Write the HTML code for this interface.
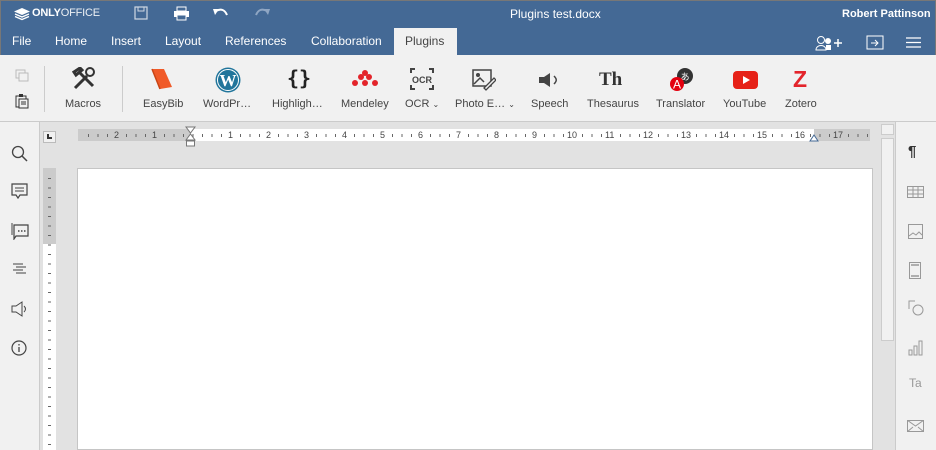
<!DOCTYPE html>
<html><head><style>
*{margin:0;padding:0;box-sizing:border-box}
body{width:936px;height:450px;overflow:hidden;font-family:"Liberation Sans",Arial,sans-serif;background:#e2e2e2;position:relative;font-size:12px;color:#444}
.abs{position:absolute}
#hdr{left:0;top:0;width:936px;height:55px;background:#446995;border:1px solid #777;border-bottom:none}
.w{color:#fff;font-size:12px}
.tab{top:34px;color:#fff;font-size:12px}
#tb{left:0;top:55px;width:936px;height:67px;background:#f1f1f1;border-bottom:1px solid #cbcbcb}
.btn{top:98px;font-size:11px;color:#444;text-align:center}
.ic{top:66px}
#ls{left:0;top:122px;width:40px;height:328px;background:#f1f1f1;border-right:1px solid #cbcbcb}
#rs{left:895px;top:122px;width:41px;height:328px;background:#f1f1f1;border-left:1px solid #cbcbcb}
.rl{font-size:9px;color:#444}
</style></head><body>
<div id="hdr" class="abs"></div>
<svg class="abs" style="left:12px;top:7px" width="20" height="14" viewBox="0 0 20 14"><path d="M10 1 18 4.5 10 8 2 4.5Z" fill="#fff"/><path d="M3 7 10 10 17 7M3 9.5 10 12.5 17 9.5" stroke="#fff" stroke-width="1.3" fill="none"/></svg>
<div class="abs w" style="left:32px;top:7px;font-weight:bold;font-size:11px;letter-spacing:-0.2px">ONLY<span style="font-weight:normal;opacity:.9">OFFICE</span></div>
<svg class="abs" style="left:134px;top:6px" width="14" height="14"><rect x="1" y="1" width="12" height="12" fill="none" stroke="#cfd8e3" stroke-width="1.2"/><rect x="4" y="1" width="6" height="4" fill="none" stroke="#cfd8e3"/></svg>
<svg class="abs" style="left:173px;top:6px" width="17" height="15"><rect x="4" y="1" width="9" height="4" fill="none" stroke="#fff"/><rect x="1" y="5" width="15" height="6" fill="#fff"/><rect x="4" y="9" width="9" height="5" fill="#446995" stroke="#fff"/></svg>
<svg class="abs" style="left:213px;top:8px" width="16" height="10"><path d="M3 3 C8 0 12 2 14 7" stroke="#fff" stroke-width="2" fill="none"/><path d="M0 1 L6 1 L2 7Z" fill="#fff"/></svg>
<svg class="abs" style="left:254px;top:8px" width="16" height="10"><path d="M13 3 C8 0 4 2 2 7" stroke="#8fa6c3" stroke-width="2" fill="none"/><path d="M16 1 L10 1 L14 7Z" fill="#8fa6c3"/></svg>
<div class="abs w" style="left:510px;top:7px">Plugins test.docx</div>
<div class="abs w" style="left:842px;top:8px;font-weight:bold;font-size:11px">Robert Pattinson</div>
<div class="abs tab" style="left:12px">File</div>
<div class="abs tab" style="left:55px">Home</div>
<div class="abs tab" style="left:111px">Insert</div>
<div class="abs tab" style="left:165px">Layout</div>
<div class="abs tab" style="left:225px">References</div>
<div class="abs tab" style="left:311px">Collaboration</div>
<div class="abs" style="left:394px;top:28px;width:63px;height:28px;background:#f1f1f1"></div>
<div class="abs tab" style="left:405px;color:#444">Plugins</div>
<svg class="abs" style="left:815px;top:35px" width="30" height="16"><circle cx="6" cy="5" r="3.5" fill="none" stroke="#fff"/><path d="M1 15 C1 9 11 9 11 15Z" fill="none" stroke="#fff"/><circle cx="13" cy="6" r="3" fill="#fff"/><rect x="11" y="10" width="5" height="5" fill="#fff"/><path d="M19 8h8M23 4v8" stroke="#fff" stroke-width="1.5"/></svg>
<svg class="abs" style="left:866px;top:35px" width="18" height="15"><rect x="1" y="1" width="16" height="13" fill="none" stroke="#fff"/><path d="M5 8h7M9 5l3 3-3 3" stroke="#fff" fill="none"/></svg>
<svg class="abs" style="left:906px;top:37px" width="15" height="11"><path d="M0 1h15M0 5.5h15M0 10h15" stroke="#fff" stroke-width="1.2"/></svg>

<div id="tb" class="abs"></div>
<svg class="abs" style="left:15px;top:69px" width="14" height="13"><rect x="1" y="1" width="9" height="8" fill="none" stroke="#bbb"/><rect x="4" y="4" width="9" height="8" fill="#f1f1f1" stroke="#bbb"/></svg>
<svg class="abs" style="left:15px;top:94px" width="14" height="15"><rect x="1" y="2" width="10" height="11" fill="none" stroke="#333"/><rect x="4" y="5" width="9" height="9" fill="#f1f1f1" stroke="#333"/><rect x="4" y="0" width="4" height="3" fill="#333"/><path d="M6 8h5M6 10h5" stroke="#333"/></svg>
<div class="abs" style="left:44px;top:66px;width:1px;height:46px;background:#ccc"></div>
<div class="abs" style="left:122px;top:66px;width:1px;height:46px;background:#ccc"></div>
<svg class="abs ic" style="left:72px;top:67px" width="24" height="24"><path d="M3 21 L15 9M7 5 L21 19M2 5 L8 1 L10 3 L4 8Z" stroke="#333" stroke-width="3" fill="none"/><circle cx="18" cy="5" r="4" fill="none" stroke="#333" stroke-width="2"/></svg>
<div class="abs btn" style="left:65px">Macros</div>
<svg class="abs ic" style="left:150px;top:67px" width="24" height="24"><path d="M2 2 L14 2 L22 20 L10 22Z" fill="#f05a28"/><path d="M2 2 L10 22" stroke="#c94515" stroke-width="1.5"/></svg>
<div class="abs btn" style="left:143px">EasyBib</div>
<svg class="abs ic" style="left:215px;top:67px" width="26" height="26"><circle cx="13" cy="13" r="12.5" fill="#21759b"/><circle cx="13" cy="13" r="10.5" fill="none" stroke="#fff" stroke-width="1"/><text x="13" y="19" text-anchor="middle" font-family="Liberation Serif" font-weight="bold" font-size="17" fill="#fff">W</text></svg>
<div class="abs btn" style="left:203px">WordPr…</div>
<div class="abs" style="left:287px;top:66px;font-size:20px;font-weight:bold;color:#222;font-family:'DejaVu Sans Mono',monospace">{}</div>
<div class="abs btn" style="left:272px">Highligh…</div>
<svg class="abs ic" style="left:351px;top:69px" width="28" height="18"><g fill="#e3242b"><circle cx="4" cy="14" r="3"/><circle cx="10" cy="8" r="3"/><circle cx="14" cy="14" r="3"/><circle cx="18" cy="8" r="3"/><circle cx="24" cy="14" r="3"/><circle cx="14" cy="4" r="3"/></g></svg>
<div class="abs btn" style="left:341px">Mendeley</div>
<svg class="abs ic" style="left:410px;top:68px" width="24" height="22"><path d="M1 5V1h4M19 1h4v4M23 17v4h-4M5 21H1v-4" stroke="#444" stroke-width="2" fill="none"/><text x="12" y="15" text-anchor="middle" font-size="9" font-weight="bold" fill="#444" font-family="Liberation Sans">OCR</text></svg>
<div class="abs btn" style="left:405px">OCR <span style="font-size:8px">⌄</span></div>
<svg class="abs ic" style="left:472px;top:69px" width="24" height="22"><rect x="1" y="1" width="18" height="16" fill="none" stroke="#444" stroke-width="1.5"/><circle cx="6" cy="6" r="2" fill="#444"/><path d="M2 15 L8 9 L12 13" stroke="#444" fill="none" stroke-width="1.5"/><path d="M12 19 L22 9 L24 11 L14 21Z" fill="#f1f1f1" stroke="#444" stroke-width="1.3"/></svg>
<div class="abs btn" style="left:455px">Photo E… <span style="font-size:8px">⌄</span></div>
<svg class="abs ic" style="left:538px;top:72px" width="24" height="16"><path d="M1 5h5l6-4v14l-6-4H1Z" fill="#444"/><path d="M16 4 C19 7 19 9 16 12" stroke="#444" stroke-width="1.5" fill="none"/></svg>
<div class="abs btn" style="left:531px">Speech</div>
<div class="abs" style="left:599px;top:69px;font-family:'Liberation Serif',serif;font-weight:bold;font-size:19px;color:#333">Th</div>
<div class="abs btn" style="left:587px">Thesaurus</div>
<svg class="abs ic" style="left:667px;top:67px" width="28" height="26"><circle cx="18" cy="9" r="8" fill="#333"/><text x="18" y="13" text-anchor="middle" font-size="9" fill="#fff" font-family="Noto Sans CJK JP">あ</text><circle cx="10" cy="17" r="7" fill="#e3000f"/><text x="10" y="21.5" text-anchor="middle" font-size="12" fill="#fff" font-family="Liberation Sans">A</text></svg>
<div class="abs btn" style="left:656px">Translator</div>
<svg class="abs ic" style="left:733px;top:71px" width="25" height="18"><rect width="25" height="18" rx="4" fill="#e62117"/><path d="M10 5v8l7-4Z" fill="#fff"/></svg>
<div class="abs btn" style="left:723px">YouTube</div>
<div class="abs" style="left:793px;top:66px;font-size:23px;font-weight:bold;color:#e3242b;font-family:'Liberation Sans'">Z</div>
<div class="abs btn" style="left:785px">Zotero</div>

<div id="ls" class="abs"></div>
<svg class="abs" style="left:11px;top:145px" width="18" height="18"><circle cx="7" cy="7" r="5.5" fill="none" stroke="#444" stroke-width="1.3"/><path d="M11 11l5 5" stroke="#444" stroke-width="1.5"/></svg>
<svg class="abs" style="left:11px;top:183px" width="18" height="18"><path d="M1 1h15v11H9l-2 3-2-3H1Z" fill="none" stroke="#444" stroke-width="1.2"/><path d="M4 5h9M4 8h9" stroke="#444"/></svg>
<svg class="abs" style="left:11px;top:222px" width="18" height="18"><path d="M3 3h14v11H5l-2 3Z" fill="none" stroke="#444" stroke-width="1.2"/><path d="M1 1v12" stroke="#444"/><path d="M7 9h1.5M10 9h1.5M13 9h1.5" stroke="#444" stroke-width="1.5"/></svg>
<svg class="abs" style="left:11px;top:262px" width="18" height="14"><path d="M2 2h10M5 5h10M2 8h10M5 11h10" stroke="#444"/></svg>
<svg class="abs" style="left:11px;top:301px" width="18" height="16"><path d="M1 5h4l6-4v14l-6-4H1Z" fill="none" stroke="#444"/><path d="M13 5c2 2 2 4 0 6" stroke="#444" fill="none"/></svg>
<svg class="abs" style="left:11px;top:340px" width="18" height="18"><circle cx="8" cy="8" r="7" fill="none" stroke="#444" stroke-width="1.2"/><path d="M8 7v5M8 4v1.5" stroke="#444" stroke-width="1.3"/></svg>

<div class="abs" style="left:43px;top:131px;width:13px;height:12px;background:#f1f1f1;border:1px solid #bbb"></div>
<div class="abs" style="left:47px;top:134px;width:5px;height:5px;border-left:2px solid #333;border-bottom:2px solid #333"></div>
<div class="abs" style="left:78px;top:129px;width:792px;height:12px;background:#fff"></div>
<div class="abs" style="left:78px;top:129px;width:112px;height:12px;background:#cbcbcb"></div>
<div class="abs" style="left:814px;top:129px;width:56px;height:12px;background:#cbcbcb"></div>
<div class="abs" style="left:80px;top:134px;width:788px;height:3px;background:repeating-linear-gradient(90deg,transparent 0,transparent 8px,#666 8px,#666 9px,transparent 9px,transparent 9.5px)"></div>
<div class="abs rl" style="left:78px;top:129px;width:792px;height:12px;line-height:12px;white-space:nowrap">
<span style="position:absolute;left:36px;background:#cbcbcb">2</span><span style="position:absolute;left:74px;background:#cbcbcb">1</span>
<span style="position:absolute;left:150px;background:#fff">1</span><span style="position:absolute;left:188px;background:#fff">2</span><span style="position:absolute;left:226px;background:#fff">3</span><span style="position:absolute;left:264px;background:#fff">4</span><span style="position:absolute;left:302px;background:#fff">5</span><span style="position:absolute;left:340px;background:#fff">6</span><span style="position:absolute;left:378px;background:#fff">7</span><span style="position:absolute;left:416px;background:#fff">8</span><span style="position:absolute;left:454px;background:#fff">9</span><span style="position:absolute;left:489px;background:#fff">10</span><span style="position:absolute;left:527px;background:#fff">11</span><span style="position:absolute;left:565px;background:#fff">12</span><span style="position:absolute;left:603px;background:#fff">13</span><span style="position:absolute;left:641px;background:#fff">14</span><span style="position:absolute;left:679px;background:#fff">15</span><span style="position:absolute;left:717px;background:#fff">16</span><span style="position:absolute;left:755px;background:#cbcbcb">17</span></div>
<svg class="abs" style="left:185px;top:126px" width="12" height="22"><path d="M1 1h9L5.5 7Z M1 14L5.5 8 10 14Z" fill="#fff" stroke="#777"/><rect x="1.5" y="15" width="8" height="5" fill="#fff" stroke="#777"/></svg>
<svg class="abs" style="left:809px;top:133px" width="10" height="9"><path d="M1 8L5 2 9 8Z" fill="#fff" stroke="#446995"/></svg>
<div class="abs" style="left:43px;top:168px;width:13px;height:282px;background:#fff"></div>
<div class="abs" style="left:43px;top:168px;width:13px;height:76px;background:#cbcbcb"></div>
<div class="abs" style="left:48px;top:170px;width:3px;height:280px;background:repeating-linear-gradient(180deg,transparent 0,transparent 8px,#666 8px,#666 9px,transparent 9px,transparent 9.5px)"></div>
<div class="abs" style="left:77px;top:168px;width:796px;height:282px;background:#fff;border:1px solid #c5c5c5"></div>
<div class="abs" style="left:881px;top:124px;width:13px;height:11px;background:#f1f1f1;border:1px solid #ccc"></div>
<div class="abs" style="left:881px;top:138px;width:13px;height:203px;background:#f1f1f1;border:1px solid #ccc"></div>
<div id="rs" class="abs"></div>
<div class="abs" style="left:908px;top:143px;font-size:15px;color:#333;font-weight:bold">¶</div>
<svg class="abs" style="left:907px;top:186px" width="17" height="12"><rect x="0.5" y="0.5" width="16" height="11" fill="none" stroke="#999"/><path d="M0 4h17M0 8h17M6 0v12M11 0v12" stroke="#999"/></svg>
<svg class="abs" style="left:908px;top:224px" width="15" height="15"><rect x="0.5" y="0.5" width="14" height="14" fill="none" stroke="#999"/><path d="M1 12l4-3 3 2 3-3 3 3" stroke="#999" fill="none"/></svg>
<svg class="abs" style="left:909px;top:262px" width="12" height="17"><rect x="0.5" y="0.5" width="11" height="16" fill="none" stroke="#999"/><path d="M2 3h8M2 14h8" stroke="#999" stroke-width="1.5"/></svg>
<svg class="abs" style="left:908px;top:300px" width="16" height="16"><path d="M7 1H1v8" stroke="#999" fill="none"/><circle cx="10" cy="10" r="5" fill="#f1f1f1" stroke="#999"/></svg>
<svg class="abs" style="left:908px;top:340px" width="16" height="16"><rect x="1" y="10" width="3" height="5" fill="none" stroke="#999"/><rect x="6" y="6" width="3" height="9" fill="none" stroke="#999"/><rect x="11" y="1" width="3" height="14" fill="none" stroke="#999"/></svg>
<div class="abs" style="left:909px;top:376px;font-size:12px;color:#999">Ta</div>
<svg class="abs" style="left:907px;top:420px" width="17" height="12"><rect x="0.5" y="0.5" width="16" height="11" fill="none" stroke="#999"/><path d="M0 0l8.5 6L17 0M0 12l6-5M17 12l-6-5" stroke="#999" fill="none"/></svg>
</body></html>
